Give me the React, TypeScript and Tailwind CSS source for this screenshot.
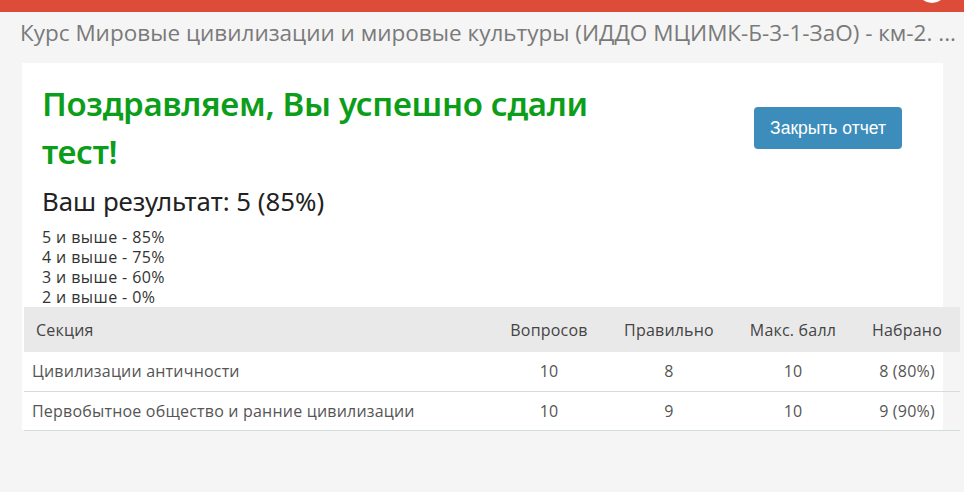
const grades = [
  "5 и выше - 85%",
  "4 и выше - 75%",
  "3 и выше - 60%",
  "2 и выше - 0%",
];

const rows = [
  { name: "Цивилизации античности", total: 10, right: 8, max: 10, score: "8 (80%)" },
  { name: "Первобытное общество и ранние цивилизации", total: 10, right: 9, max: 10, score: "9 (90%)" },
];

export default function App() {
  return (
    <div className="relative w-[964px] h-[492px] overflow-hidden bg-[#f5f5f5] font-['Open_Sans',sans-serif]">
      <div className="relative h-[12px] bg-[#dd4b39]">
        <div className="absolute left-[917px] top-[-27px] w-[30px] h-[30px] rounded-full bg-white" />
      </div>

      <div className="flex h-[480px]">
        <div className="flex-1">
          <h1 className="px-[20px] pt-[6px] text-[22.5px] leading-[30px] text-[#7a7a7a] whitespace-nowrap overflow-hidden">
            Курс Мировые цивилизации и мировые культуры (ИДДО МЦИМК-Б-3-1-ЗаО) - км-2. ...
          </h1>

          <div className="mt-[15px] ml-[22px] w-[921px] h-[367px] bg-white">
            <div className="flex items-center justify-between pl-[20px] pr-[41px] pt-[17px]">
              <h2 className="w-[560px] text-[33px] leading-[48px] font-semibold tracking-[-0.3px] text-[#0c9e1a] font-['Noto_Sans',sans-serif]">
                Поздравляем, Вы успешно сдали тест!
              </h2>
              <button className="h-[42px] px-[16px] rounded-[4px] bg-[#3c8dbc] text-white text-[17.5px] font-['Liberation_Sans',sans-serif]">
                Закрыть отчет
              </button>
            </div>

            <p className="mt-[8px] pl-[20px] text-[25.8px] leading-[34px] text-[#222] font-['Noto_Sans',sans-serif]">
              Ваш результат: 5 (85%)
            </p>

            <div className="mt-[9px] pl-[20px] text-[16px] leading-[20px] tracking-[0.4px] text-[#333]">
              {grades.map((g) => (
                <div key={g}>{g}</div>
              ))}
            </div>

            <table className="ml-[2px] w-[936px] table-fixed border-collapse text-[16px] tracking-[0.2px] text-[#555]">
              <colgroup>
                <col className="w-[468px]" />
                <col className="w-[114px]" />
                <col className="w-[126px]" />
                <col className="w-[122px]" />
                <col className="w-[106px]" />
              </colgroup>
              <thead>
                <tr className="h-[45px] bg-[#e9e9e9] text-[#444]">
                  <th className="pl-[12px] text-left font-normal">Секция</th>
                  <th className="font-normal">Вопросов</th>
                  <th className="font-normal">Правильно</th>
                  <th className="font-normal">Макс. балл</th>
                  <th className="font-normal">Набрано</th>
                </tr>
              </thead>
              <tbody>
                {rows.map((r) => (
                  <tr key={r.name} className="h-[39px] border-b border-[#d3dedb]">
                    <td className="pl-[8px]">{r.name}</td>
                    <td className="text-center">{r.total}</td>
                    <td className="text-center">{r.right}</td>
                    <td className="text-center">{r.max}</td>
                    <td className="text-center">{r.score}</td>
                  </tr>
                ))}
              </tbody>
            </table>
          </div>
        </div>
        <div className="w-[2px] bg-[#2a2a2a]" />
      </div>
    </div>
  );
}
